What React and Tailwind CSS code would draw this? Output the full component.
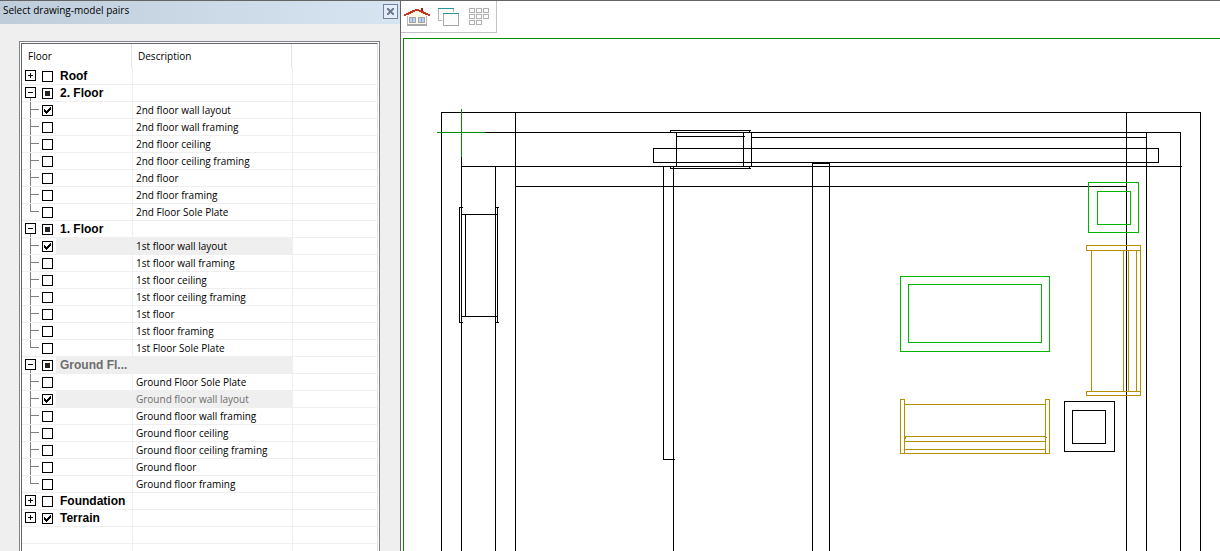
import { useState } from "react";
import clsx from "clsx";

const floors = [
  { name: "Roof", state: "off", open: false, items: [] },
  {
    name: "2. Floor",
    state: "some",
    open: true,
    items: [
      { name: "2nd floor wall layout", on: true },
      { name: "2nd floor wall framing" },
      { name: "2nd floor ceiling" },
      { name: "2nd floor ceiling framing" },
      { name: "2nd floor" },
      { name: "2nd floor framing" },
      { name: "2nd Floor Sole Plate" },
    ],
  },
  {
    name: "1. Floor",
    state: "some",
    open: true,
    items: [
      { name: "1st floor wall layout", on: true, shaded: true },
      { name: "1st floor wall framing" },
      { name: "1st floor ceiling" },
      { name: "1st floor ceiling framing" },
      { name: "1st floor" },
      { name: "1st floor framing" },
      { name: "1st Floor Sole Plate" },
    ],
  },
  {
    name: "Ground Fl...",
    state: "some",
    open: true,
    shaded: true,
    muted: true,
    items: [
      { name: "Ground Floor Sole Plate" },
      { name: "Ground floor wall layout", on: true, shaded: true, muted: true },
      { name: "Ground floor wall framing" },
      { name: "Ground floor ceiling" },
      { name: "Ground floor ceiling framing" },
      { name: "Ground floor" },
      { name: "Ground floor framing" },
    ],
  },
  { name: "Foundation", state: "off", open: false, items: [] },
  { name: "Terrain", state: "on", open: false, items: [] },
];

const blankRows = Array.from({ length: 60 }, (_, i) => i);

function Tick({ label, checked = false, mixed = false }) {
  return (
    <span className="relative mt-[3px] size-[11px] shrink-0">
      <input
        type="checkbox"
        aria-label={label}
        defaultChecked={checked}
        ref={(el) => {
          if (el) el.indeterminate = mixed;
        }}
        className="peer block size-[11px] appearance-none border border-black bg-white"
      />
      <svg
        viewBox="0 0 7 7"
        shapeRendering="crispEdges"
        className="pointer-events-none absolute left-[2px] top-[2px] hidden size-[7px] peer-checked:block"
      >
        <path d="M0 2h1v1h1v1h1v-1h1v-1h1v-1h1v-1h1v3h-1v1h-1v1h-1v1h-1v1h-1v-1h-1v-1h-1z" />
      </svg>
      <span className="pointer-events-none absolute left-[3px] top-[3px] hidden size-[5px] bg-[#222] peer-indeterminate:block" />
    </span>
  );
}

function Expander({ open, label, onClick }) {
  return (
    <span className="ml-[3px] flex w-[17px] shrink-0 flex-col pt-[2px]">
      <button
        type="button"
        aria-expanded={open}
        aria-label={label}
        onClick={onClick}
        className="size-[11px] shrink-0 border border-black bg-white"
      >
        <svg viewBox="0 0 9 9" shapeRendering="crispEdges" className="block size-[9px]">
          <path d={open ? "M2 4h5v1h-5z" : "M2 4h5v1h-5zM4 2h1v5h-1z"} />
        </svg>
      </button>
      {open && <span className="ml-[5px] flex-1 border-l border-[#808080]" />}
    </span>
  );
}

function Branch({ last }) {
  return (
    <span className="ml-2 mr-[3px] flex w-[9px] shrink-0 flex-col">
      <span className="h-2 border-b border-l border-[#808080]" />
      {!last && <span className="flex-1 border-l border-[#808080]" />}
    </span>
  );
}

function Row({ lead, name, text, shaded, muted }) {
  const cell = "border-b border-r border-[#efefef] p-0";
  return (
    <tr>
      <td className={cell}>
        <div className="flex h-4">
          {lead}
          <span
            className={clsx(
              "ml-[3px] flex-1 whitespace-nowrap pl-1 font-['Liberation_Sans',sans-serif] text-[12px] font-bold",
              shaded && "bg-[#efefef]",
              muted && "text-[#6d6d6d]"
            )}
          >
            {name}
          </span>
        </div>
      </td>
      <td
        className={clsx(
          cell,
          "whitespace-nowrap pl-[3px]",
          shaded && "bg-[#efefef]",
          muted && "text-[#6d6d6d]"
        )}
      >
        {text}
      </td>
      <td className="border-b border-[#efefef] p-0" />
    </tr>
  );
}

function FloorTree() {
  const [open, setOpen] = useState(floors.map((f) => f.open));
  const toggle = (i) => setOpen(open.map((o, n) => (n === i ? !o : o)));

  return (
    <table className="w-full table-fixed border-separate border-spacing-0 text-[10px] leading-4">
      <colgroup>
        <col className="w-[111px]" />
        <col className="w-[160px]" />
        <col />
      </colgroup>
      <thead>
        <tr className="text-left">
          <th className="p-0 font-normal">
            <div className="mr-px h-6 border-r border-[#e3e3e3] pl-[6px] pt-1">Floor</div>
          </th>
          <th className="p-0 font-normal">
            <div className="mr-px h-6 border-r border-[#e3e3e3] pl-[5px] pt-1">Description</div>
          </th>
          <th className="p-0" />
        </tr>
      </thead>
      {floors.map((floor, i) => (
        <tbody key={floor.name}>
          <Row
            name={floor.name}
            shaded={floor.shaded}
            muted={floor.muted}
            lead={
              <>
                <Expander open={open[i]} label={`Expand ${floor.name}`} onClick={() => toggle(i)} />
                <Tick label={floor.name} checked={floor.state === "on"} mixed={floor.state === "some"} />
              </>
            }
          />
          {open[i] &&
            floor.items.map((item, n) => (
              <Row
                key={item.name}
                text={item.name}
                shaded={item.shaded}
                muted={item.muted}
                lead={
                  <>
                    <Branch last={n === floor.items.length - 1} />
                    <Tick label={item.name} checked={item.on} />
                  </>
                }
              />
            ))}
        </tbody>
      ))}
      <tbody aria-hidden="true">
        {blankRows.map((n) => (
          <Row key={n} />
        ))}
      </tbody>
    </table>
  );
}

function HouseIcon() {
  return (
    <svg viewBox="0 0 28 20" className="h-5 w-7" shapeRendering="crispEdges">
      <path d="M4 8L14 2L24 8V17H4z" fill="#fdf9e6" />
      <path d="M4 8h1v9h-1zM23 8h1v9h-1z" fill="#b9b9b9" />
      <path d="M4 16h20v2h-20z" fill="#a9a9a9" />
      <path d="M6 9h7v6h-7zM15 9h7v6h-7z" fill="#a2a6ac" />
      <path d="M7 10h2v4h-2zM10 10h2v4h-2zM16 10h2v4h-2zM19 10h2v4h-2z" fill="#b4d2fa" />
      <path d="M18 0h2v5h-2z" fill="#8f1d1d" />
      <path d="M1 7.5L14 1.5L27 7.5" fill="none" stroke="#c8351f" strokeWidth="2" />
    </svg>
  );
}

function WindowsIcon() {
  return (
    <svg viewBox="0 0 24 20" className="h-5 w-6" shapeRendering="crispEdges">
      <path d="M0 0h16v13h-16z" fill="#b4b4b4" />
      <path d="M1 1h14v11h-14z" fill="#fcfcfc" />
      <path d="M0 0h16v1h-16z" fill="#2a9595" />
      <path d="M4 4h13v9h-13z" fill="#fff" />
      <path d="M5 5h16v13h-16z" fill="#a8a8a8" />
      <path d="M6 6h14v11h-14z" fill="#fcfcfc" />
      <path d="M5 5h16v1h-16z" fill="#2a9595" />
    </svg>
  );
}

function GridIcon() {
  const cells = [
    [0, 0], [7, 0], [14, 0],
    [0, 6], [7, 6], [14, 6],
    [0, 12], [7, 12],
  ];
  return (
    <svg viewBox="0 0 20 20" className="size-5" shapeRendering="crispEdges">
      {cells.map(([x, y]) => (
        <path key={`${x}-${y}`} d={`M${x} ${y}h6v5h-6zM${x + 1} ${y + 1}v3h4v-3z`} fill="#b0b0b0" />
      ))}
    </svg>
  );
}

const wallLines = [
  // outer walls
  "M441 4000V112H1200V4000",
  "M485 132H1180V4000",
  "M461 157V4000",
  "M461 166H1181",
  "M495 166V4000",
  "M515 112V4000",
  "M515 186H1126",
  "M1126 112V4000",
  "M1146 132V4000",
  // beam
  "M653 148H1158V162H653z",
  "M751 137H1146",
  // top window
  "M670 132V130H750M749 130V132",
  "M670 166V168H750M749 166V168",
  "M676 132V166M743 132V166M751 132V166",
  "M676 136H744",
  // left window
  "M462 207H459V322H462",
  "M495 207H498M497 207V322M495 322H498",
  "M461 214H497M461 316H497M465 214V316",
  // inner partitions
  "M663 166V459H674",
  "M673 166V4000",
  "M812 162V4000M829 162V4000M812 163H829",
  // side table
  "M1064 401H1114V451H1064z",
  "M1072 410H1105V443H1072z",
];

const tableLines = [
  "M1088 182H1138V232H1088z",
  "M1097 191H1130V224H1097z",
  "M900 276H1049V351H900z",
  "M908 284H1041V342H908z",
];

const sofaLines = [
  "M1086 245H1140V250H1086z",
  "M1086 391H1140V395H1086z",
  "M1091 250V391M1123 250V391M1128 250V391M1136 250V391M1140 250V391",
  "M900 399H904V453H900z",
  "M1045 399H1049V453H1045z",
  "M904 404H1045M904 436H1045M904 441H1045M904 449H1045M904 453H1045",
  "M905 436V438M1045 437H1046",
];

function FloorPlan() {
  return (
    <svg className="block h-full w-full" role="img" aria-label="Floor plan" shapeRendering="crispEdges">
      <g transform="translate(-403.5 -38.5)" fill="none" strokeWidth="1" strokeLinecap="square">
        <path d={wallLines.join("")} stroke="#000" />
        <path d="M437 132H484M461 109V156" stroke="#008c00" />
        <path d={tableLines.join("")} stroke="#00b400" />
        <path d={sofaLines.join("")} stroke="#b49000" />
      </g>
    </svg>
  );
}

export default function App() {
  return (
    <div className="flex h-screen overflow-hidden border-t border-[#646464] bg-white font-['Open_Sans','Liberation_Sans',sans-serif] text-[10px] leading-4 text-black">
      <aside className="flex w-[401px] shrink-0 flex-col border-r border-[#646464] bg-[#efefef]">
        <header className="flex h-[23px] shrink-0 items-start justify-between bg-linear-to-r from-[#bfcddb] to-[#d7e4f2] pl-[3px] pr-[2px] pt-px">
          <h1>Select drawing-model pairs</h1>
          <button
            type="button"
            aria-label="Close"
            className="mt-[2px] flex size-[15px] items-center justify-center border border-[#738399] bg-[#e4edf9]"
          >
            <svg viewBox="0 0 7 7" className="size-[7px]">
              <path d="M0 0L7 7M7 0L0 7" stroke="#6b7a8f" strokeWidth="2" />
            </svg>
          </button>
        </header>
        <div className="ml-[19px] mr-5 mt-[17px] min-h-0 flex-1 border-x border-t border-[#80848a] bg-white px-px pt-px">
          <div className="h-full overflow-hidden border-l border-r border-t border-l-[#646464] border-r-[#e3e3e3] border-t-[#646464]">
            <FloorTree />
          </div>
        </div>
      </aside>
      <main className="flex min-w-0 flex-1 flex-col">
        <div className="flex h-8 shrink-0">
          <div role="toolbar" className="flex gap-[7px] border-b border-r border-[#c4c4c4] pl-[2px] pr-[7px] pt-[7px]">
            <button type="button" aria-label="Model" className="flex items-start">
              <HouseIcon />
            </button>
            <button type="button" aria-label="Windows" className="flex items-start">
              <WindowsIcon />
            </button>
            <button type="button" aria-label="Grid" className="flex items-start">
              <GridIcon />
            </button>
          </div>
        </div>
        <div className="ml-[2px] mt-[5px] min-h-0 flex-1 border-l border-t border-[#008c00]">
          <FloorPlan />
        </div>
      </main>
    </div>
  );
}
